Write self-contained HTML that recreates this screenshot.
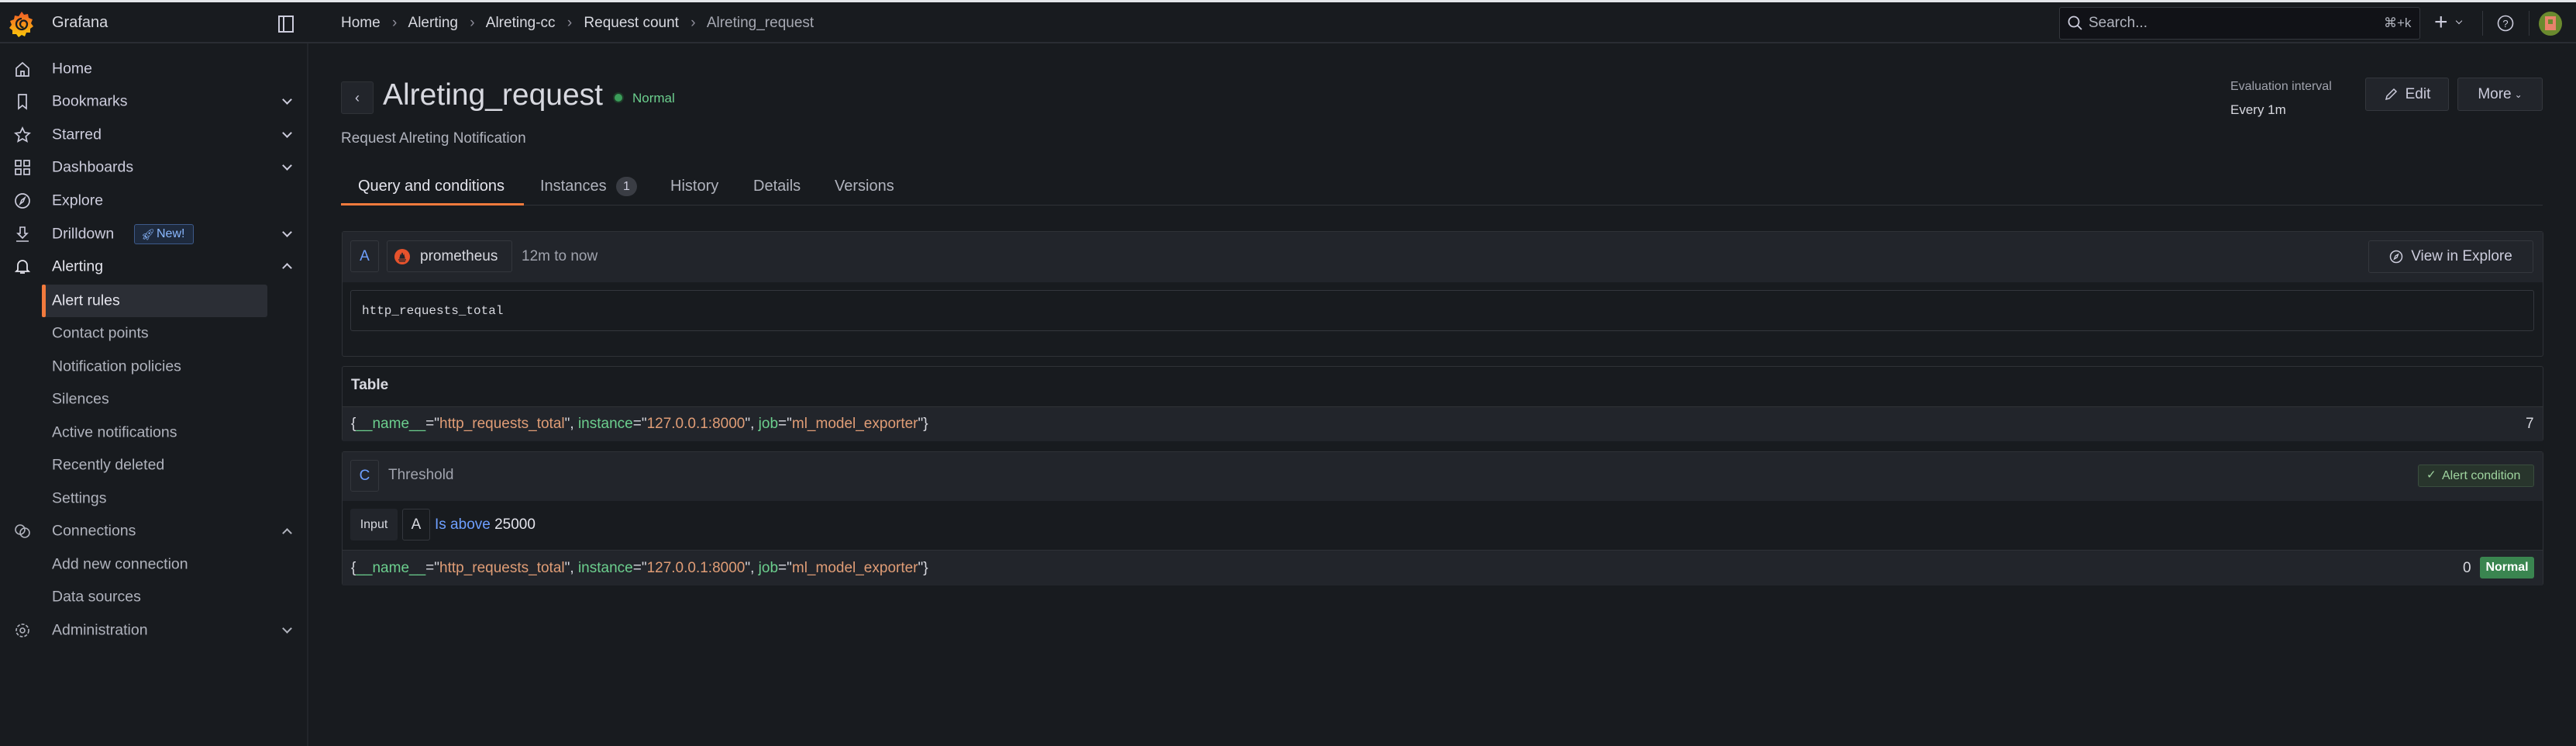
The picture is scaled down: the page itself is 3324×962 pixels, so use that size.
<!DOCTYPE html>
<html><head><meta charset="utf-8"><style>
*{box-sizing:border-box;margin:0;padding:0}
body{width:3324px;height:962px;background:#181b1f;font-family:"Liberation Sans",sans-serif;color:#ccccdc;position:relative;overflow:hidden}
.a{position:absolute;white-space:nowrap}
.top{position:absolute;left:0;top:0;width:3324px;height:3px;background:#e4e6ea}
.hdr{position:absolute;left:0;top:3px;width:3324px;height:53px;border-bottom:2px solid #2a2d33}
.side{position:absolute;left:396px;top:56px;width:2px;height:906px;background:#22252a}
.sb{font-size:19.5px;color:#ccccdc;transform:translateY(-50%)}
.sub{color:#b0b3bd}
.chev{position:absolute;left:366px;width:9px;height:9px;border-right:2px solid #ccccdc;border-bottom:2px solid #ccccdc;transform:rotate(45deg)}
.chup{transform:rotate(-135deg)}
.ic{position:absolute;left:18px;transform:translateY(-50%)}
.box{position:absolute;border:1px solid #34373d;border-radius:3px}
.panel{position:absolute;left:441px;width:2841px;border:1px solid #2f3237;border-radius:3px;background:#181b1f}
.ph{position:absolute;left:0;top:0;width:100%;background:#22252b}
.lbl{color:#6ccf8e}.val{color:#e09d76}
.btn{position:absolute;background:#22252b;border:1px solid #34373d;border-radius:3px;font-size:19px;color:#ccccdc;display:flex;align-items:center;justify-content:center;gap:10px}
</style></head><body>
<div class="top"></div>
<div class="hdr"></div>
<div class="side"></div>

<!-- logo -->
<svg class="a" style="left:12px;top:14px" width="32" height="34" viewBox="0 0 32 34"><defs><linearGradient id="g" x1="0" y1="0" x2="0" y2="1"><stop offset="0" stop-color="#f05a28"/><stop offset="1" stop-color="#fbca0a"/></linearGradient></defs><path d="M16 1l3 4 5-1 1 5 5 2-2 5 3 4-4 3 0 5-5 0-2 5-4-2-4 3-3-4-5 0 0-5-4-3 3-4-2-5 5-2 1-5 5 1z" fill="url(#g)"/><path d="M16 10a7 7 0 1 0 7 7 4.5 4.5 0 1 0-4.5 4.5" fill="none" stroke="#181b1f" stroke-width="2.3"/></svg>
<div class="a" style="left:67px;top:18px;font-size:20px;color:#d8d9e0">Grafana</div>
<svg class="a" style="left:359px;top:20px" width="20" height="22"><rect x="1" y="1" width="18" height="20" fill="none" stroke="#ccccdc" stroke-width="2"/><line x1="7" y1="1" x2="7" y2="21" stroke="#ccccdc" stroke-width="2"/></svg>

<!-- breadcrumb -->
<div class="a" style="left:440px;top:19px;font-size:19px;color:#d8d9e0">Home <span style="color:#8e8e9a;margin:0 10px">›</span> Alerting <span style="color:#8e8e9a;margin:0 10px">›</span> Alreting-cc <span style="color:#8e8e9a;margin:0 10px">›</span> Request count <span style="color:#8e8e9a;margin:0 10px">›</span> <span style="color:#a6a8b2">Alreting_request</span></div>

<!-- search -->
<div class="a" style="left:2657px;top:9px;width:466px;height:42px;background:#111217;border:1px solid #34373d;border-radius:3px"></div>
<svg class="a" style="left:2668px;top:20px" width="20" height="20"><circle cx="8" cy="8" r="6.5" fill="none" stroke="#ccccdc" stroke-width="1.8"/><line x1="13" y1="13" x2="18" y2="18" stroke="#ccccdc" stroke-width="1.8"/></svg>
<div class="a" style="left:2695px;top:19px;font-size:19px;color:#b0b3bd">Search...</div>
<div class="a" style="left:3076px;top:20px;font-size:17px;color:#b0b3bd">⌘+k</div>
<div class="a" style="left:3141px;top:12px;font-size:30px;color:#ccccdc;font-weight:300">+</div>
<div class="chev" style="left:3170px;top:24px;width:6px;height:6px;border-width:1.5px"></div>
<div class="a" style="left:3203px;top:14px;width:1px;height:32px;background:#34373d"></div>
<svg class="a" style="left:3222px;top:19px" width="22" height="22"><circle cx="11" cy="11" r="9.5" fill="none" stroke="#ccccdc" stroke-width="1.6"/><text x="11" y="16" font-size="13" text-anchor="middle" fill="#ccccdc" font-family="Liberation Sans">?</text></svg>
<div class="a" style="left:3263px;top:14px;width:1px;height:32px;background:#34373d"></div>
<div class="a" style="left:3276px;top:15px;width:30px;height:31px;border-radius:50%;background:#6a8a2e;overflow:hidden"><div style="position:absolute;left:8px;top:6px;width:14px;height:18px;background:#e8836c"></div><div style="position:absolute;left:12px;top:10px;width:6px;height:6px;background:#6a8a2e"></div></div>

<!-- sidebar -->
<svg class="ic" style="top:89px" width="22" height="22" viewBox="0 0 22 22"><path d="M3 10L11 3l8 7v10H3z M9 20v-6h4v6" fill="none" stroke="#ccccdc" stroke-width="1.7"/></svg>
<div class="a sb" style="left:67px;top:89px">Home</div>
<svg class="ic" style="top:131px" width="22" height="22"><path d="M6 2h10v18l-5-4-5 4z" fill="none" stroke="#ccccdc" stroke-width="1.7"/></svg>
<div class="a sb" style="left:67px;top:131px">Bookmarks</div><div class="chev" style="top:124px"></div>
<svg class="ic" style="top:174px" width="22" height="22"><path d="M11 2l2.8 6 6.2.7-4.7 4.2 1.4 6.3L11 16l-5.7 3.2 1.4-6.3L2 8.7 8.2 8z" fill="none" stroke="#ccccdc" stroke-width="1.7"/></svg>
<div class="a sb" style="left:67px;top:174px">Starred</div><div class="chev" style="top:167px"></div>
<svg class="ic" style="top:216px" width="22" height="22"><g fill="none" stroke="#ccccdc" stroke-width="1.7"><rect x="2" y="2" width="7" height="7"/><rect x="13" y="2" width="7" height="7"/><rect x="2" y="13" width="7" height="7"/><rect x="13" y="13" width="7" height="7"/></g></svg>
<div class="a sb" style="left:67px;top:216px">Dashboards</div><div class="chev" style="top:209px"></div>
<svg class="ic" style="top:259px" width="22" height="22"><circle cx="11" cy="11" r="9" fill="none" stroke="#ccccdc" stroke-width="1.7"/><path d="M14 7l-2 5-4 3 2-5z" fill="none" stroke="#ccccdc" stroke-width="1.5"/></svg>
<div class="a sb" style="left:67px;top:259px">Explore</div>
<svg class="ic" style="top:302px" width="22" height="22"><path d="M8 2h6v8h3l-6 6-6-6h3z M3 20h16" fill="none" stroke="#ccccdc" stroke-width="1.6"/></svg>
<div class="a sb" style="left:67px;top:302px">Drilldown</div>
<div class="a" style="left:173px;top:289px;width:77px;height:26px;background:#1e2a3d;border:1px solid #3d5a8a;border-radius:3px;color:#8ab8ff;font-size:16px;line-height:24px;padding-left:28px">New!</div>
<div class="a" style="left:182px;top:294px;color:#8ab8ff;font-size:14px">🚀︎</div>
<div class="chev" style="top:295px"></div>
<svg class="ic" style="top:344px" width="22" height="22"><path d="M5 15V9a6 6 0 0112 0v6l2 2H3z M8 19h6" fill="none" stroke="#e4e4ec" stroke-width="1.8"/></svg>
<div class="a sb" style="left:67px;top:344px;color:#e4e4ec">Alerting</div><div class="chev chup" style="top:341px"></div>
<div class="a" style="left:54px;top:367px;width:291px;height:42px;background:#2b2e35;border-radius:3px"></div>
<div class="a" style="left:54px;top:367px;width:5px;height:42px;background:#f27a3d;border-radius:2px"></div>
<div class="a sb" style="left:67px;top:388px;color:#e4e4ec">Alert rules</div>
<div class="a sb sub" style="left:67px;top:430px">Contact points</div>
<div class="a sb sub" style="left:67px;top:473px">Notification policies</div>
<div class="a sb sub" style="left:67px;top:515px">Silences</div>
<div class="a sb sub" style="left:67px;top:558px">Active notifications</div>
<div class="a sb sub" style="left:67px;top:600px">Recently deleted</div>
<div class="a sb sub" style="left:67px;top:643px">Settings</div>
<svg class="ic" style="top:685px" width="22" height="22"><g fill="none" stroke="#b0b3bd" stroke-width="1.6"><circle cx="8" cy="9" r="6"/><circle cx="14" cy="13" r="6"/></g></svg>
<div class="a sb sub" style="left:67px;top:685px">Connections</div><div class="chev chup" style="top:683px;border-color:#b0b3bd"></div>
<div class="a sb sub" style="left:67px;top:728px">Add new connection</div>
<div class="a sb sub" style="left:67px;top:770px">Data sources</div>
<svg class="ic" style="top:813px" width="22" height="22"><circle cx="11" cy="11" r="3" fill="none" stroke="#b0b3bd" stroke-width="1.6"/><circle cx="11" cy="11" r="8" fill="none" stroke="#b0b3bd" stroke-width="1.6" stroke-dasharray="4 2"/></svg>
<div class="a sb sub" style="left:67px;top:813px">Administration</div><div class="chev" style="top:806px;border-color:#b0b3bd"></div>

<!-- title area -->
<div class="a" style="left:440px;top:105px;width:42px;height:42px;background:#22252b;border:1px solid #2f3237;border-radius:3px;color:#ccccdc;font-size:18px;text-align:center;line-height:40px">‹</div>
<div class="a" style="left:494px;top:101px;font-size:39px;color:#d8d9e0">Alreting_request</div>
<div class="a" style="left:791px;top:119px;width:14px;height:14px;border-radius:50%;background:#1e3a28"></div>
<div class="a" style="left:793px;top:121px;width:10px;height:10px;border-radius:50%;background:#3b9d5a"></div>
<div class="a" style="left:816px;top:117px;font-size:17px;color:#6ccf8e">Normal</div>
<div class="a" style="left:440px;top:168px;font-size:19px;color:#b0b3bd">Request Alreting Notification</div>

<div class="a" style="left:2878px;top:103px;font-size:16px;color:#a0a3ad">Evaluation interval</div>
<div class="a" style="left:2878px;top:132px;font-size:17px;color:#d8d9e0">Every 1m</div>
<div class="btn" style="left:3052px;top:100px;width:108px;height:43px"><svg width="18" height="18"><path d="M3 15l1-4 9-9 3 3-9 9z" fill="none" stroke="#ccccdc" stroke-width="1.5"/></svg>Edit</div>
<div class="btn" style="left:3171px;top:100px;width:110px;height:43px">More <span style="font-size:12px;margin-left:-6px">⌄</span></div>

<!-- tabs -->
<div class="a" style="left:440px;top:264px;width:2841px;height:1px;background:#2f3237"></div>
<div class="a" style="left:440px;top:262px;width:236px;height:3px;background:#f27a3d"></div>
<div class="a" style="left:462px;top:229px;font-size:20px;color:#e4e4ec">Query and conditions</div>
<div class="a" style="left:697px;top:229px;font-size:20px;color:#b0b3bd">Instances</div>
<div class="a" style="left:795px;top:228px;width:27px;height:25px;border-radius:13px;background:#3a3d44;color:#ccccdc;font-size:16px;text-align:center;line-height:25px">1</div>
<div class="a" style="left:865px;top:229px;font-size:20px;color:#b0b3bd">History</div>
<div class="a" style="left:972px;top:229px;font-size:20px;color:#b0b3bd">Details</div>
<div class="a" style="left:1077px;top:229px;font-size:20px;color:#b0b3bd">Versions</div>

<!-- query panel -->
<div class="panel" style="top:298px;height:162px"><div class="ph" style="height:65px"></div></div>
<div class="box" style="left:452px;top:310px;width:37px;height:41px;color:#6e9fff;font-size:19px;text-align:center;line-height:39px">A</div>
<div class="box" style="left:499px;top:310px;width:162px;height:41px"></div>
<svg class="a" style="left:508px;top:320px" width="22" height="22"><circle cx="11" cy="11" r="10" fill="#e6522c"/><path d="M6 15h10M7 17h8M8 13h6l-1-4-1 2-1-5-1 5-1-2z" stroke="#22252b" stroke-width="1.3" fill="#22252b"/></svg>
<div class="a" style="left:542px;top:320px;font-size:19px;color:#d8d9e0">prometheus</div>
<div class="a" style="left:673px;top:320px;font-size:19px;color:#a0a3ad">12m to now</div>
<div class="btn" style="left:3056px;top:310px;width:213px;height:42px"><svg width="18" height="18"><circle cx="9" cy="9" r="7.5" fill="none" stroke="#ccccdc" stroke-width="1.5"/><path d="M11.5 6l-1.5 4-3.5 2 1.5-4z" fill="none" stroke="#ccccdc" stroke-width="1.3"/></svg>View in Explore</div>
<div class="a" style="left:452px;top:374px;width:2818px;height:53px;border:1px solid #34373d;border-radius:3px;background:#181b1f"></div>
<div class="a" style="left:467px;top:392px;font-family:'Liberation Mono',monospace;font-size:16px;color:#d8d9e0">http_requests_total</div>

<!-- table panel -->
<div class="panel" style="top:472px;height:97px"><div class="ph" style="top:51px;height:45px;border-top:1px solid #2f3237"></div></div>
<div class="a" style="left:453px;top:486px;font-size:19px;font-weight:bold;color:#d8d9e0">Table</div>
<div class="a" style="left:453px;top:536px;font-size:19px;color:#d8d9e0">{<span class="lbl">__name__</span>="<span class="val">http_requests_total</span>", <span class="lbl">instance</span>="<span class="val">127.0.0.1:8000</span>", <span class="lbl">job</span>="<span class="val">ml_model_exporter</span>"}</div>
<div class="a" style="left:3259px;top:536px;font-size:19px;color:#d8d9e0">7</div>

<!-- threshold panel -->
<div class="panel" style="top:582px;height:173px"><div class="ph" style="height:63px"></div><div class="ph" style="top:126px;height:46px;border-top:1px solid #2f3237"></div></div>
<div class="box" style="left:452px;top:593px;width:37px;height:41px;color:#6e9fff;font-size:19px;text-align:center;line-height:39px">C</div>
<div class="a" style="left:501px;top:602px;font-size:19px;color:#a0a3ad">Threshold</div>
<div class="a" style="left:3120px;top:599px;width:150px;height:29px;background:#28352c;border:1px solid #3a4d3e;border-radius:3px;color:#9fd49f;font-size:16px;line-height:27px;padding-left:30px">Alert condition</div>
<div class="a" style="left:3131px;top:603px;color:#9fd49f;font-size:15px">✓</div>
<div class="a" style="left:452px;top:656px;width:61px;height:41px;background:#22252b;border-radius:3px;color:#d8d9e0;font-size:16px;text-align:center;line-height:41px">Input</div>
<div class="box" style="left:519px;top:656px;width:36px;height:41px;color:#d8d9e0;font-size:19px;text-align:center;line-height:39px">A</div>
<div class="a" style="left:561px;top:666px;font-size:19px;color:#6e9fff">Is above <span style="color:#e4e4ec">25000</span></div>
<div class="a" style="left:453px;top:722px;font-size:19px;color:#d8d9e0">{<span class="lbl">__name__</span>="<span class="val">http_requests_total</span>", <span class="lbl">instance</span>="<span class="val">127.0.0.1:8000</span>", <span class="lbl">job</span>="<span class="val">ml_model_exporter</span>"}</div>
<div class="a" style="left:3178px;top:722px;font-size:19px;color:#d8d9e0">0</div>
<div class="a" style="left:3200px;top:718px;width:70px;height:28px;background:#3a8550;border-radius:3px;color:#fff;font-size:16px;font-weight:bold;text-align:center;line-height:28px">Normal</div>
</body></html>
